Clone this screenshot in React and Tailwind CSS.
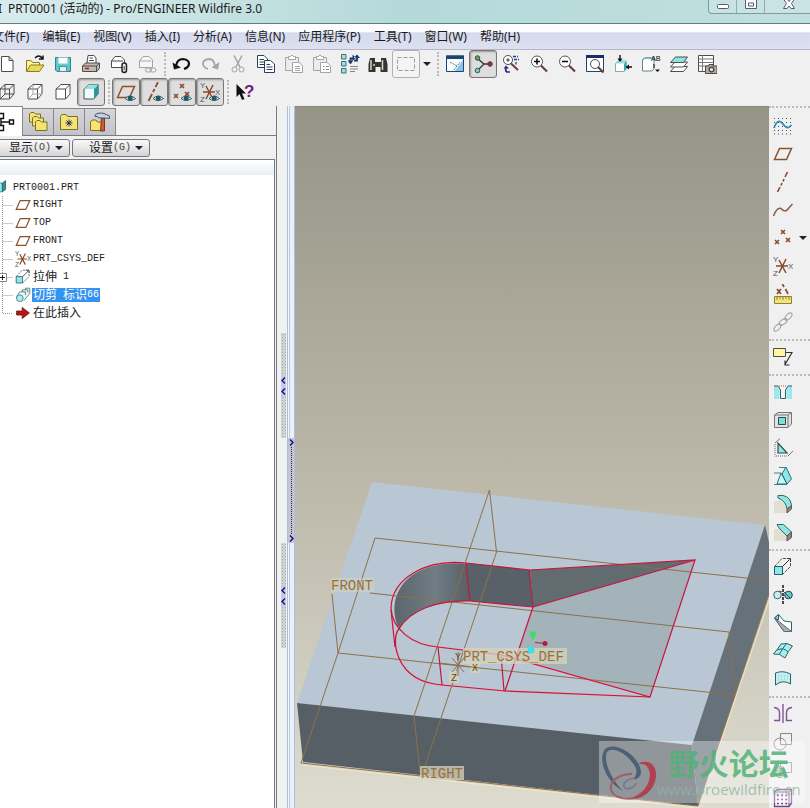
import React, { useState } from 'react';

const Icon = ({ children, className = 'w-5 h-5' }) => (
  <svg viewBox="0 0 20 20" className={`${className} shrink-0`} fill="none" stroke="#4d4d4d" strokeWidth="1">
    {children}
  </svg>
);

const Eye = () => (
  <g stroke="none">
    <path d="M9 16.5Q14 11.5 19.5 16.5Q14 20.5 9 16.5Z" fill="#e4f2f2" stroke="#35575c" />
    <circle cx="14.2" cy="16.3" r="2.5" fill="#1d5c66" />
  </g>
);

const Csys = () => (
  <g>
    <path d="M3 10H15M6 4L13 17M13 3L6 17" stroke="#8a4a2c" strokeWidth="1.5" />
    <g fill="#555" stroke="none" className="text-[8px] font-['Liberation_Sans',sans-serif]">
      <text x="0" y="6">Y</text>
      <text x="15" y="13">X</text>
      <text x="0" y="20">Z</text>
    </g>
  </g>
);

const Magnifier = ({ sign }) => (
  <g>
    <circle cx="8" cy="7.5" r="5.5" fill="#fff" stroke="#555" />
    <path d="M12 11.5L18 17.5" stroke="#69413a" strokeWidth="2.2" />
    <path d={sign === 'plus' ? 'M5 7.5H11M8 4.5V10.5' : 'M5 7.5H11'} stroke="#111" strokeWidth="1.6" />
  </g>
);

const Plane = () => <path d="M6.5 4.5H18.5L13.5 15.5H1.5Z" stroke="#8a5230" strokeWidth="1.5" />;

const Points = () => (
  <path d="M8 2L12 6M12 2L8 6M2 12L6 16M6 12L2 16M13 10L17 14M17 10L13 14" stroke="#8a4a2c" strokeWidth="1.6" />
);

const Clipboard = () => (
  <g stroke="#a5a5a5" fill="#ececec">
    <path d="M1.5 3.5H14.5V16.5H1.5Z" />
    <path d="M4.5 5.5V2.5H6.5Q8 -.5 9.5 2.5H11.5V5.5Z" fill="#fff" />
    <path d="M8.5 8.5H15L18.5 11.5V18.5H8.5Z" fill="#fff" />
  </g>
);

const Cube = ({ fill = '#fff', shaded }) => (
  <g>
    <path d="M3 7L8 2.5H17V12L12.5 17H3Z" fill={fill} />
    {shaded ? (
      <g stroke="none">
        <path d="M3 7L8 2.5H17.5L13 7Z" fill="#8fe3e3" />
        <path d="M13 7L17.5 2.5V12L13 17Z" fill="#2f969c" />
      </g>
    ) : (
      <path d="M3 7H12.5V17M12.5 7L17 2.5" />
    )}
  </g>
);

const glyphs = {
  new: <path d="M4.5 2.5H12L16 6.5V17.5H4.5ZM12 2.5V6.5H16" fill="#fff" />,
  open: (
    <g>
      <path d="M1.5 17V6.5H6L7.5 8.5H14.5V11" fill="#fff3a0" stroke="#8b7a23" />
      <path d="M1.5 17.5L5.5 11H19L14.5 17.5Z" fill="#eadb55" stroke="#8b7a23" />
      <path d="M10 4Q14 0 17 4M18 1.5V5H14" stroke="#111" strokeWidth="1.5" />
    </g>
  ),
  save: (
    <g>
      <path d="M2.5 3.5H17.5V17.5H4L2.5 16Z" fill="#5ac8cf" stroke="#3b7f89" />
      <path d="M5 3.5H15V10H5Z" fill="#f7ffff" stroke="#83c5cb" />
      <path d="M6.5 12.5H13.5V17.5H6.5Z" fill="#d7f6f6" stroke="#5a8b90" />
    </g>
  ),
  print: (
    <g>
      <path d="M6 9L7 1.5H13L15 4V9" fill="#fff" />
      <path d="M8.5 4H12M8 6.5H13" />
      <path d="M1.5 12L4.5 9H18.5V14L16 17.5H1.5Z" fill="#c4b9ac" />
      <path d="M1.5 12H15.5V17.5M15.5 12L18.5 9" />
      <path d="M4 14.5H8" stroke="#8f2f20" strokeWidth="1.5" />
    </g>
  ),
  send: (
    <g>
      <path d="M2.5 7L6 2.5H12L15.5 6V13.5H2.5Z" fill="#fff" />
      <path d="M2.5 7H14" />
      <rect x="13" y="9" width="4.500" height="9.500" rx="2.200" strokeWidth="1.500" stroke="#222" fill="#e8e8e8" />
      <path d="M15.2 12V16" />
    </g>
  ),
  link: (
    <g stroke="#a5a5a5">
      <path d="M2.5 7L6 2.5H12L15.5 6V13.5H2.5Z" fill="#f6f6f6" />
      <path d="M2.5 7H14" />
      <rect x="8.5" y="14" width="6" height="4" rx="2" fill="#eee" />
      <rect x="13" y="14" width="6" height="4" rx="2" />
    </g>
  ),
  undo: (
    <g>
      <path d="M4 12Q5 5 11 5Q17.5 6 17 10Q16.5 13.5 12 15" stroke="#111" strokeWidth="2.2" />
      <path d="M.5 8.5L2 15.5L9 13.5Z" fill="#111" stroke="none" />
    </g>
  ),
  redo: (
    <g>
      <path d="M15 12Q14 5 9 5Q2.5 6 3 10Q3.5 13.5 8 15" stroke="#a5a5a5" strokeWidth="1.8" />
      <path d="M19.5 8L18 15.5L11.5 13.5Z" fill="#a5a5a5" stroke="none" />
    </g>
  ),
  cut: (
    <g stroke="#a0a0a0">
      <path d="M6 1.5L12 13M14 1.5L8 13" strokeWidth="1.4" />
      <circle cx="6.5" cy="15.5" r="2.5" />
      <circle cx="13.5" cy="15.5" r="2.5" />
    </g>
  ),
  copy: (
    <g stroke="#29405c" fill="#fff">
      <path d="M1.5 1.5H8L11.5 5V13.5H1.5Z" />
      <path d="M3.500 5.500H8M3.500 8H8M3.500 10.500H8" />
      <path d="M8.500 6.500H14.500L18.500 10V18.500H8.500Z" />
      <path d="M10.500 10.500H14M10.500 13H16.500M10.500 15.500H16.500" />
    </g>
  ),
  paste: (
    <g>
      <Clipboard />
      <path d="M11 12.5H16M11 14.5H16M11 16.5H16" stroke="#a5a5a5" />
    </g>
  ),
  pasteSpecial: (
    <g>
      <Clipboard />
      <path d="M11 12.5H12.5M14 12.5H17M11 15.5H12.5M14 15.5H17" stroke="#888" />
    </g>
  ),
  regenerate: (
    <g>
      <path d="M1.5 .5H6V5H1.5ZM1.5 7.500H6V12H1.5ZM1.5 14.500H6V19H1.5Z" fill="#a5dedc" stroke="#33757b" />
      <path d="M10.500 9.500V4.500H13.500M17 2V6.500H14" stroke="#193870" strokeWidth="1.800" />
      <path d="M12.500 .5L16 4L12.500 6.500ZM7.500 6.500H13.500L10.500 10ZM13.500 4H20L17 .5Z" fill="#193870" stroke="none" />
      <path d="M10 12.500H18M10 15H18M10 17.500H15" stroke="#888" />
    </g>
  ),
  find: (
    <g>
      <path d="M2 4H7V8H13V4H18L19.500 10V18H12.500V13H7.500V18H.5V10Z" fill="#35352f" stroke="none" />
      <path d="M3 6V16M6 10V12M14.500 6V16" stroke="#d8d8c8" strokeWidth="1.500" />
    </g>
  ),
  select: <path d="M1.5 3.5H18.5V16.5H1.5Z" stroke="#999" strokeDasharray="4 2" />,
  repaint: (
    <g>
      <path d="M1.5 2H18.5V17.5H1.5Z" fill="#f8fdff" stroke="#1e4375" />
      <path d="M1 1.5H19V5H1Z" fill="#1e4375" stroke="none" />
      <path d="M10 17L18 6V17Z" fill="#8bc1e8" stroke="none" />
      <path d="M5 8L12 12L15 8M12 12L9 16" stroke="#55707f" strokeDasharray="2 1" />
    </g>
  ),
  spin: (
    <g>
      <path d="M4 4L11 10H16M11 10L5 16" stroke="#333" strokeWidth="1.3" />
      <circle cx="4.5" cy="4" r="2.3" fill="#48ad4d" />
      <circle cx="17" cy="10" r="2.3" fill="#b32032" />
      <circle cx="4.5" cy="16.5" r="2.3" fill="#61d6d6" />
    </g>
  ),
  orient: (
    <g>
      <circle cx="7" cy="6" r="4.5" fill="#fff" />
      <circle cx="7" cy="6" r="1.2" fill="#c88" />
      <path d="M10 9.5L17 16" stroke="#69413a" strokeWidth="2" />
      <path d="M12 2.5H17M13 5.5H18M15 8V10.5" stroke="#2c3f8d" strokeWidth="1.3" strokeDasharray="3 1" />
      <path d="M9 18H6Q4 17 5 14" stroke="#252b83" strokeWidth="1.7" />
      <path d="M2.500 14.5L5 11.5L8 14.5Z" fill="#252b83" stroke="none" />
    </g>
  ),
  zoomIn: <Magnifier sign="plus" />,
  zoomOut: <Magnifier />,
  refit: (
    <g>
      <path d="M1.5 1.5H18.5V17.5H1.5Z" fill="#fff" stroke="#1e4375" />
      <path d="M1 1H19V4H1Z" fill="#1d2b6e" stroke="none" />
      <circle cx="10" cy="10" r="4.5" />
      <path d="M13 13L18.5 18.5" stroke="#69413a" strokeWidth="2.2" />
    </g>
  ),
  reorient: (
    <g>
      <path d="M2.5 9.5L5 7H13V15L11 17.5H2.5Z" fill="#fff" stroke="#79b1b3" />
      <path d="M11 9.5L13.5 7V15L11 17.5Z" fill="#3aa9ab" stroke="none" />
      <path d="M3 9.5L5 7H13L11 9.5Z" fill="#94e0e0" stroke="none" />
      <path d="M7 1V6M14 13H19" stroke="#111" strokeWidth="1.4" />
      <path d="M4.5 4.5H9.5L7 8ZM16 10.5V15.5L12.5 13Z" fill="#111" stroke="none" />
    </g>
  ),
  views: (
    <g>
      <path d="M1.500 6L3.500 4H13V15L11 17H1.500Z" fill="#fff" stroke="#6a8588" />
      <path d="M1.500 6L3.500 4H10" stroke="#3fabad" />
      <path d="M12 10H14V14H12Z" fill="#666" stroke="none" />
      <path d="M14 15.500H19L16.500 18Z" fill="#111" stroke="none" />
      <text x="10" y="7" fill="#111" stroke="none" className="text-[8px] font-['Liberation_Mono',monospace]">AB</text>
    </g>
  ),
  layers: (
    <g>
      <path d="M1.500 17.500L6 12.500H18.500L14.500 17.500Z" fill="#fff" />
      <path d="M1.500 13L6 8H18.500L14.500 13Z" fill="#fff" />
      <path d="M1.500 8.500L6.500 3H18.500L14.500 8.500Z" fill="#8de4e0" />
    </g>
  ),
  viewManager: (
    <g>
      <path d="M1.500 1.500H16.500V17.500H1.500Z" fill="#fff" />
      <path d="M5.500 1.500V17.500M1.500 5H16.500M1.500 8.500H16.500M1.500 12H16.500" stroke="#777" />
      <path d="M8.500 12H12V10.500H16V12H20V19.500H8.500Z" fill="#b8aca2" />
      <circle cx="14.500" cy="15.500" r="2.300" fill="#eee" strokeWidth="1.500" />
    </g>
  ),
  wireframe: (
    <g>
      <Cube fill="none" />
      <path d="M8 2.500V12L3 17M8 12H17" />
    </g>
  ),
  hiddenLine: (
    <g>
      <Cube />
      <path d="M8 3V12L3 17M8 12H17" stroke="#a4a4a4" />
    </g>
  ),
  noHidden: <Cube />,
  shading: <Cube fill="#effcfc" shaded />,
  planeDisplay: <g><Plane /><Eye /></g>,
  axisDisplay: <g><path d="M14 0L11.500 5M10.500 7L9 10M8 12L4.500 19" stroke="#8a4a2c" strokeWidth="1.700" /><Eye /></g>,
  pointDisplay: <g><Points /><Eye /></g>,
  csysDisplay: <g><Csys /><Eye /></g>,
  help: (
    <g>
      <path d="M1.500 2V15L4.500 12L7 18L9.500 17L7 11.500H11Z" fill="#111" stroke="none" />
      <text x="9" y="15" fill="#702080" stroke="none" className="text-[17px] font-bold font-['Liberation_Sans',sans-serif]">?</text>
    </g>
  ),
  sketch: (
    <g>
      <path d="M1 2.500H19M1 6.500H19M1 10.500H19M1 14.500H19M1 18H19" stroke="#39506b" strokeDasharray="1 3" />
      <path d="M1 12C4 4 7 4 10 8S15 13 18.500 9" stroke="#2f88b6" strokeWidth="1.800" />
    </g>
  ),
  plane: <Plane />,
  axis: <path d="M14.500 0L12 5M11 7L10 9.500M9 11L8 13.500M7 15L4.500 20" stroke="#8a4a2c" strokeWidth="1.600" />,
  curve: <path d="M.5 16Q4 7 8 8.500Q12 13 15 9L19.500 4" stroke="#8a5a42" strokeWidth="1.500" />,
  points: <Points />,
  csys: <Csys />,
  analysis: (
    <g>
      <path d="M4 5L8 10M8 5L4 10M9.500 0L11 3M12.500 5L15 10" stroke="#8a4a2c" strokeWidth="1.700" />
      <path d="M1.500 12.500H18.500V19.500H1.500Z" fill="#f0e57c" stroke="#8c8135" />
      <path d="M4 13V16M7 13V15M10 13V16M13 13V15M16 13V16" stroke="#8c8135" />
    </g>
  ),
  reference: (
    <g stroke="#999">
      <ellipse cx="4.500" cy="15.500" rx="4.500" ry="2.300" transform="rotate(-48 4.500 15.500)" />
      <ellipse cx="10" cy="10" rx="4.500" ry="2.300" transform="rotate(-35 10 10)" />
      <ellipse cx="15.500" cy="4.500" rx="4.500" ry="2.300" transform="rotate(-48 15.500 4.500)" />
    </g>
  ),
  annotation: (
    <g>
      <path d="M.5 1.500H12.500V9.500H.5Z" fill="#fff6a0" />
      <path d="M13 5.500H19L12 17.500M12 13.500V18H16.500" stroke="#333" strokeWidth="1.200" />
    </g>
  ),
  hole: (
    <g>
      <path d="M1 4H19V17H13.500V8L16 4H4L6.500 8V17H1Z" fill="#9ee7ea" stroke="none" />
      <path d="M6 4H14L12.500 8V16.500H7.500V8Z" fill="#f4f4f4" stroke="none" />
      <path d="M1 4H5L7.500 8V16.500H12.500V8L15 4H19" stroke="#315e68" />
      <path d="M6 4H14" stroke="#b55" strokeDasharray="1 1" />
    </g>
  ),
  shell: (
    <g>
      <path d="M1.500 5L5 2.500H18.500V14L15 17.500H1.500Z" fill="#e2e2e2" stroke="#777" />
      <path d="M1.500 5H15V17.500M15 5L18.500 2.500" stroke="#777" />
      <path d="M5.500 7.500H12.500V14.500H5.500Z" fill="#7edce0" stroke="#274d53" />
    </g>
  ),
  rib: (
    <g>
      <path d="M5 5V15L14 15Z" fill="#98e6e2" stroke="#2b4b51" strokeWidth="1.200" />
      <path d="M2 6V18.500M3 18H15" stroke="#666" strokeDasharray="1 1" />
      <path d="M2 5L7 .5M15 18L20 13" stroke="#777" />
    </g>
  ),
  draft: (
    <g>
      <path d="M9 8L13 1L18.500 13L14 18Z" fill="#8be8e8" stroke="#267078" />
      <path d="M6 1.500H13M1 7H8M1 18.500H14" stroke="#3a868c" />
      <path d="M8 7L14 18H4Z" fill="#c9f6f5" stroke="#267078" />
    </g>
  ),
  round: (
    <g>
      <path d="M1 7H8L14 13V19H1Z" fill="#e3ded2" stroke="none" />
      <path d="M5 1.500H10Q18 3 18.500 12L14 15Q13 7 5 4Z" fill="#8ee6e3" stroke="#37686b" />
      <path d="M14 15L18.500 11.500V15L14 19Z" fill="#8d857c" stroke="#655" />
    </g>
  ),
  chamfer: (
    <g>
      <path d="M1 7H8L14 13V19H1Z" fill="#e3ded2" stroke="none" />
      <path d="M4 2.500H10.500L18.500 10L14 14L6 6Z" fill="#8ee6e3" stroke="#37686b" />
      <path d="M14 14L18.500 10V15.500L14 19Z" fill="#8d857c" stroke="#655" />
    </g>
  ),
  extrude: (
    <g>
      <path d="M1.500 9.500H9.500V17.500H1.500Z" fill="#8ce7ec" stroke="#285c66" />
      <path d="M1.500 9.500L9 1.500H17.500V9.500L9.500 17.500" stroke="#555" strokeDasharray="3 1" />
      <path d="M9.500 9.500L16.500 2.500M14 1.500H17.500V5" stroke="#333" />
    </g>
  ),
  revolve: (
    <g>
      <circle cx="4.500" cy="10" r="3.800" fill="#c8eded" stroke="#35686c" />
      <circle cx="15.500" cy="10" r="3.800" fill="#6ec6ca" stroke="#1d4b50" />
      <path d="M10 0V20" stroke="#111" strokeWidth="1.500" strokeDasharray="3 1" />
      <path d="M6 6L9 7M11 7L17 13" />
    </g>
  ),
  sweep: (
    <g>
      <path d="M1.500 5L5.500 1.500L11 8L18.500 9V18.500H11Z" fill="#fff" stroke="#28666b" />
      <path d="M1.500 5L5.500 1.500V7Z" fill="#79dde4" stroke="#28666b" />
      <path d="M1.500 5L18.500 18.500H11Z" fill="#a3b3b6" stroke="#667" />
    </g>
  ),
  boundary: (
    <g stroke="#28636b">
      <path d="M.5 13Q4 9 8 3Q14 1 19.500 5Q15 10 12 17Q7 12 .5 13Z" fill="#a6edf0" />
      <path d="M4 9Q11 6 15 11M13.500 2.500Q9 8 6.500 13" />
    </g>
  ),
  style: (
    <g>
      <path d="M2.500 4Q10 1 17.500 5V15Q10 10 2.500 16Z" fill="#c3efef" stroke="#28636b" />
      <path d="M5 7H15M5 10H15M6 12H9" stroke="#7bcaca" strokeDasharray="1 2" />
    </g>
  ),
  mirror: (
    <g stroke="#81539a" strokeWidth="1.400">
      <path d="M10 0V19M1 3.500Q6 4 6.500 8V16.500H1M19 3.500Q14 4 13.500 8V16.500H19" />
    </g>
  ),
  merge: (
    <g stroke="#888">
      <path d="M7.500 1.500H18.500V12.500H7.500Z" />
      <circle cx="7" cy="12" r="6" />
    </g>
  ),
  trim: (
    <g stroke="#8b9a8e">
      <path d="M7.500 2.500H18.500V12.500H7.500Z" />
      <circle cx="7" cy="12" r="5.500" />
      <path d="M7 6.500V18L2 14ZM2 11H12" />
    </g>
  ),
  pattern: (
    <g>
      <path d="M1.500 4L4 1.500H18.500V15L16 18.500H1.500Z" fill="#f7f2fa" stroke="#6d4580" strokeWidth="1.300" />
      <path d="M16 4V18.500M1.500 4H16L18.500 1.500" stroke="#6d4580" />
      <path d="M4 7.500H15M4 11.500H15M4 15.500H15" stroke="#4b285e" strokeWidth="1.700" strokeDasharray="1.700 2.500" />
    </g>
  ),
  modelTree: <path d="M1.500 1.500H6.500V6.500H1.500ZM1.500 13.500H6.500V18.500H1.500ZM12.500 8H16.500V12H12.500ZM4 7V13M4 10H12" stroke="#111" strokeWidth="1.400" />,
  folders: (
    <g fill="#f4e572" stroke="#7a702a">
      <path d="M1.500 10V2L3 .5H6L7.500 2H12.500V10Z" />
      <path d="M4.500 14V6L6 4.500H9L10.500 6H15.500V14Z" />
      <path d="M7.500 18.500V10L9 8.500H12L13.500 10H19V18.500Z" />
    </g>
  ),
  favorites: (
    <g>
      <path d="M1.500 17.500V4.500L3 2.500H7L8.500 4.500H18.500V17.500Z" fill="#f4e572" stroke="#7a702a" />
      <path d="M10 7.500V14.500M6.500 11H13.500M7.500 8.500L12.500 13.500M12.500 8.500L7.500 13.500" stroke="#252b6b" />
    </g>
  ),
  connections: (
    <g>
      <path d="M.5 18.500V10L2 8H6L7.500 10H12.500V18.500Z" fill="#f4e572" stroke="#7a702a" />
      <path d="M11.500 6H14.500V19H10.500Z" fill="#cf5c33" stroke="#7c351e" />
      <path d="M5 3Q8 0 14 1.500L19.500 4V6.500L14.500 6H9Q7 3.500 5 4.500Z" fill="#c5d1dd" stroke="#43576b" />
    </g>
  ),
  cutFeature: (
    <g stroke="#2f767a">
      <path d="M2 12L6 6H9V3.500H13V1.500H18.500V8L11 17" fill="#e9fafa" />
      <path d="M9 6H13V10M13 3.500H16V7" stroke="#555" />
      <circle cx="6" cy="14" r="4.200" fill="#b4eaea" />
    </g>
  ),
  insert: <path d="M2 7.500H9V3L18 10L9 17V12.500H2Z" fill="#b91318" stroke="#6c1515" />,
  part: (
    <g>
      <path d="M1 5H13V16H1Z" fill="#8beaea" stroke="#32898e" />
      <path d="M13 5L17 2V13L13 16Z" fill="#2f9197" stroke="#285f63" />
    </g>
  ),
};

const menus = ['文件(F)', '编辑(E)', '视图(V)', '插入(I)', '分析(A)', '信息(N)', '应用程序(P)', '工具(T)', '窗口(W)', '帮助(H)'];

const topRow = [
  ['new', 'open', 'save', 'print', 'send', 'link'],
  ['undo', 'redo', 'cut', 'copy', 'paste', 'pasteSpecial', 'regenerate', 'find', 'select'],
  ['repaint', 'spin', 'orient', 'zoomIn', 'zoomOut', 'refit', 'reorient', 'views', 'layers', 'viewManager'],
];

const displayRow = [
  ['wireframe', 'hiddenLine', 'noHidden', 'shading'],
  ['planeDisplay', 'axisDisplay', 'pointDisplay', 'csysDisplay'],
  ['help'],
];

const featureGroups = [
  ['sketch', 'plane', 'axis', 'curve', 'points', 'csys', 'analysis', 'reference'],
  ['annotation'],
  ['hole', 'shell', 'rib', 'draft', 'round', 'chamfer'],
  ['extrude', 'revolve', 'sweep', 'boundary', 'style'],
  ['mirror', 'merge', 'trim', 'pattern'],
];

const treeItems = [
  { icon: 'plane', name: 'RIGHT' },
  { icon: 'plane', name: 'TOP' },
  { icon: 'plane', name: 'FRONT' },
  { icon: 'csys', name: 'PRT_CSYS_DEF' },
  { icon: 'extrude', cjk: '拉伸', name: ' 1', expandable: true },
  { icon: 'cutFeature', cjk: '切剪', name: ' ', cjk2: '标识', suffix: '66' },
  { icon: 'insert', cjk: '在此插入' },
];

const Caret = () => (
  <svg viewBox="0 0 8 4" className="w-2 h-1 shrink-0">
    <path d="M0 0H8L4 4Z" fill="#222" />
  </svg>
);

const ToolButton = ({ name, pressed, onClick }) => {
  let frame = 'border-transparent';
  if (pressed) frame = 'border-[#777] bg-[#dedede] shadow-[inset_1px_1px_2px_#999]';
  if (name === 'select') frame = 'border-[#b0b0b0] bg-[#f4f4f4]';
  return (
    <button
      type="button"
      aria-label={name}
      onClick={onClick}
      className={`w-7 h-7 shrink-0 flex items-center justify-center border rounded-[3px] ${frame}`}
    >
      <Icon>{glyphs[name]}</Icon>
    </button>
  );
};

const Toolbar = ({ groups, pressed, onToggle }) => (
  <div className="flex h-7 -ml-[7px]">
    {groups.map((group, index) => (
      <div key={index} className="flex items-center">
        {index > 0 && <span className="w-[7px] h-6 flex justify-center"><i className="border-l-2 border-dotted border-[#bbb]" /></span>}
        {group.map((name) => (
          <ToolButton key={name} name={name} pressed={pressed.includes(name)} onClick={() => onToggle(name)} />
        ))}
        {group.includes('select') && (
          <button type="button" aria-label="select options" className="w-3.5 h-7 flex items-center justify-center">
            <Caret />
          </button>
        )}
      </div>
    ))}
  </div>
);

const Connector = ({ expandable, last }) => (
  <svg viewBox="0 0 13 18" className="w-[13px] h-[18px] shrink-0" fill="none">
    <path d={last ? 'M2.5 0V9.5H13' : 'M2.5 0V18M2.5 9.5H13'} stroke="#999" strokeDasharray="1 1" />
    {expandable && (
      <g>
        <path d="M-2.500 5.500H6.500V13.500H-2.500Z" fill="#fff" stroke="#888" />
        <path d="M0 9.500H5M2.500 7V12" stroke="#222" />
      </g>
    )}
  </svg>
);

const ModelTree = () => {
  const [selected, setSelected] = useState(5);
  return (
    <div className="flex-1 mr-px bg-white border-t border-r border-[#777a88]">
      <div className="h-3 mt-[3px] bg-gradient-to-b from-[#fafbfc] to-[#edf0f3]" />
      <div className="mt-[3px] flex items-center h-[18px] text-[10px] text-[#222] font-['Liberation_Mono',monospace]">
        <span className="w-[13px] -ml-2 mr-2 shrink-0"><Icon className="w-4 h-4">{glyphs.part}</Icon></span>
        PRT0001.PRT
      </div>
      <ul className="font-['Liberation_Mono','Noto_Sans_CJK_SC',monospace]">
        {treeItems.map((item, index) => (
          <li key={item.name + index} className="flex items-center h-[18px]">
            <Connector expandable={item.expandable} last={index === treeItems.length - 1} />
            <span className="w-[19px] flex justify-center"><Icon className="w-4 h-4">{glyphs[item.icon]}</Icon></span>
            <button
              type="button"
              onClick={() => setSelected(index)}
              className={`px-px flex items-center whitespace-pre leading-[14px] ${selected === index ? 'bg-[#3492f0] text-white' : 'text-[#222]'}`}
            >
              {item.cjk && <span className="pt-0.5 text-[12px] leading-3">{item.cjk}</span>}
              <span className="text-[10px]">{item.name}</span>
              {item.cjk2 && <span className="pt-0.5 text-[12px] leading-3">{item.cjk2}</span>}
              {item.suffix && <span className="text-[10px]">{item.suffix}</span>}
            </button>
          </li>
        ))}
      </ul>
    </div>
  );
};

const Navigator = () => {
  const [tab, setTab] = useState('modelTree');
  return (
    <aside className="w-[277px] shrink-0 flex flex-col border-r border-[#777a88]">
      <div className="flex items-end h-[30px] -ml-2 border-b border-[#777a88]">
        {['modelTree', 'folders', 'favorites', 'connections'].map((name) => (
          <button
            key={name}
            type="button"
            aria-label={name}
            onClick={() => setTab(name)}
            className={`w-[31px] flex items-center justify-center border-t border-r border-[#888] ${
              tab === name ? 'h-[30px] -mb-px bg-white' : 'h-[27px] bg-gradient-to-b from-[#d6d6da] to-[#c2c2c8]'
            }`}
          >
            <Icon>{glyphs[name]}</Icon>
          </button>
        ))}
      </div>
      <div className="flex items-center gap-0.5 h-[23px] -ml-2">
        {[['显示', '(O)'], ['设置', '(G)']].map(([label, key]) => (
          <button
            key={label}
            type="button"
            className="w-[78px] h-[18px] pl-4 pr-1.5 flex items-center justify-between border border-[#777] rounded-[3px] bg-gradient-to-b from-[#fafafa] to-[#d4d4d4] font-['Liberation_Mono','Noto_Sans_CJK_SC',monospace]"
          >
            <span className="flex items-center">
              <span className="pt-0.5 text-[12px] leading-3">{label}</span>
              <span className="text-[10px] text-[#444]">{key}</span>
            </span>
            <Caret />
          </button>
        ))}
      </div>
      <ModelTree />
    </aside>
  );
};

const Arrows = ({ path, count = 1 }) => (
  <>
    {Array.from({ length: count }, (_, i) => (
      <svg key={i} viewBox="0 0 5 9" className="w-[5px] h-[9px]" fill="none" stroke="#17177c" strokeWidth="1.5">
        <path d={path} />
      </svg>
    ))}
  </>
);

const Grip = () => (
  <button type="button" aria-label="collapse" className="w-[5px] h-[105px] flex flex-col items-center bg-[#d2d2d2] bg-[radial-gradient(#aaa_1px,transparent_1px)] bg-[length:3px_3px]">
    <span className="mt-[42px] py-px flex flex-col gap-0.5 bg-[#c9c9e6]">
      <Arrows path="M4 1.500L1 4.500L4 7.500" count={2} />
    </span>
  </button>
);

const Splitter = () => (
  <div className="flex shrink-0">
    <div className="w-2.5 pt-[227px] pr-px flex flex-col items-end gap-[105px] bg-[#f1f1f1]">
      <Grip />
      <Grip />
    </div>
    <div className="w-2 pt-[332px] border-x border-[#a9c0dc] bg-[linear-gradient(90deg,#f4f8fd_1px,#b4cae4_1px,#b4cae4_2px,#e9f0f9_2px)]">
      <button type="button" aria-label="expand" className="w-full h-[105px] flex flex-col items-center bg-[#c4c4d4]">
        <Arrows path="M1 1.500L4 4.500L1 7.500" />
        <i className="flex-1 border-l border-dotted border-[#222]" />
        <Arrows path="M1 1.500L4 4.500L1 7.500" />
      </button>
    </div>
  </div>
);

const Viewport = () => (
  <main className="flex-1 min-w-0 border-t border-[#88867b] bg-gradient-to-b from-[#969486] via-[#b9b6a8] to-[#dedccf]">
    <svg viewBox="295 107 474 701" className="w-full h-auto" fill="none">
      <defs>
        <linearGradient id="wall" x1="391" y1="0" x2="470" y2="0" gradientUnits="userSpaceOnUse">
          <stop offset="0" stopColor="#59636a" />
          <stop offset=".55" stopColor="#707d85" />
          <stop offset="1" stopColor="#565f65" />
        </linearGradient>
      </defs>
      <path d="M372 482L765 525L692 745L297 703Z" fill="#b8c7d3" />
      <path d="M297 703L692 745L698 806L303 762Z" fill="#575f66" />
      <path d="M765 525L776 573L698 806L692 745Z" fill="#66717a" />
      <path d="M533 607L695 560L650 697L517 658Z" fill="#a4b2ba" />
      <path d="M399 629C386 601 400 560 466 563L470 601C437 600 410 610 399 629Z" fill="url(#wall)" />
      <path d="M466 563L530 570L533 607L470 601Z" fill="#586168" />
      <path d="M530 570L695 560L533 607Z" fill="#626b70" />

      <g stroke="#f3e4c9">
        <path d="M301 765L698 808L772 592" />
      </g>
      <g stroke="#8d7048">
        <path d="M774 581L375 538L338 653L301 763L698 806L771 588" />
        <path d="M332 594L338 653L735 695L729 632L370 593" />
        <path d="M420 772L414 716L489.500 490L496.500 552L424 769" />
      </g>

      <g stroke="#f0a5b5" strokeWidth="2" opacity=".5">
        <path d="M466 563C426 559 392 578 391 608C392 629 412 645 438 647L502 655L650 697" />
        <path d="M399 629C391 637 393 681 442 685L505 691L650 697" />
      </g>
      <g stroke="#c8143c" strokeWidth="1.200">
        <path d="M466 563C426 559 392 578 391 608C392 629 412 645 438 647L502 655L650 697L695 560L530 570Z" />
        <path d="M391 610L395 647M399 629C410 610 437 600 470 601L533 607L695 560M533 607L505 691" />
        <path d="M399 629C391 637 393 681 442 685L505 691L650 697" />
        <path d="M466 563L470 601M529 570L533 607M438 647L442 685M501 655L504 691" />
      </g>

      <g fill="#d8d3b9" fillOpacity=".75">
        <path d="M463 648H567V664H463ZM420 766H464V780H420ZM470 661H480V673H470ZM449 671H459V683H449Z" />
        <path d="M331 578H374V592H331Z" fillOpacity=".5" />
      </g>
      <g stroke="#8d7048">
        <path d="M440 663L480 668M458 652V676M452 672L464 658M452 658L464 672" />
      </g>
      <g fill="#96713f" className="text-[14px] font-['Liberation_Mono',monospace]">
        <text x="331" y="590">FRONT</text>
        <text x="463" y="661">PRT_CSYS_DEF</text>
        <text x="421" y="778">RIGHT</text>
      </g>
      <g fill="#5f4a29" className="text-[10px] font-['Liberation_Mono',monospace]">
        <text x="455" y="660">Y</text>
        <text x="472" y="671">X</text>
        <text x="451" y="681">Z</text>
      </g>
      <path d="M533 634V639" stroke="#43dc62" strokeWidth="3" />
      <circle cx="533" cy="634" r="3" fill="#43dc62" />
      <circle cx="531" cy="650" r="3.500" fill="#35e4e9" />
      <path d="M535 642.500L545 643.500" stroke="#b31f3a" />
      <circle cx="545" cy="643.500" r="2.500" fill="#b31f3a" />
    </svg>
  </main>
);

const FeatureBar = () => (
  <nav className="w-[41px] shrink-0 pt-1 border-t-2 border-dotted border-[#bbb]">
    {featureGroups.map((group, index) => (
      <div key={group[0]}>
        {index > 0 && <div className="h-[7px] flex items-center"><i className="w-full border-t-2 border-dotted border-[#bbb]" /></div>}
        {group.map((name) => (
          <div key={name} className="flex items-center">
            <ToolButton name={name} />
            {name === 'points' && (
              <button type="button" aria-label="point types" className="ml-0.5"><Caret /></button>
            )}
          </div>
        ))}
      </div>
    ))}
  </nav>
);

const Watermark = () => (
  <div className="absolute right-[5px] bottom-[5px] h-[62px] w-[206px] flex items-center bg-white/35 pointer-events-none">
    <svg viewBox="0 0 58 62" className="w-[58px] h-[62px] shrink-0 opacity-75" fill="none">
      <path d="M24 50C8 42-2 19 6 8C17-1 42 16 42 32C41 37 37 39 34 38C39 33 38 28 35 24C28 12 13 5 8 11C4 20 12 38 24 50Z" fill="#35506d" />
      <path d="M38 23C50 17 58 24 57 36C55 50 43 60 28 58C43 55 51 44 51 33C50 25 46 22 38 23Z" fill="#b92539" />
      <path d="M33 33C20 33 10 40 12 49C15 57 26 59 36 57" stroke="#a34a58" strokeWidth="2" />
      <path d="M36 37C28 38 22 43 26 47C31 49 36 46 37 42" stroke="#6d6d85" strokeWidth="1.500" />
    </svg>
    <div className="flex flex-col items-center leading-none whitespace-nowrap">
      <span className="text-[30px] leading-[34px] font-bold text-[#52b279]/85 font-['Noto_Sans_CJK_SC',sans-serif]">野火论坛</span>
      <span className="text-[15px] leading-5 text-[#8cb5a4]/80 font-['Open_Sans',sans-serif]">www.proewildfire.cn</span>
    </div>
  </div>
);

const App = () => {
  const [pressed, setPressed] = useState(['spin', 'shading', 'planeDisplay', 'axisDisplay', 'pointDisplay', 'csysDisplay']);

  const toggle = (name) => {
    setPressed((prev) => (prev.includes(name) ? prev.filter((item) => item !== name) : [...prev, name]));
  };

  return (
    <div className="relative h-screen flex flex-col overflow-hidden bg-[#f0f0f0] text-[#1a1a1a] font-['Noto_Sans','Noto_Sans_CJK_SC',sans-serif]">
      <header className="h-6 shrink-0 flex items-start justify-between border-b border-[#5b7f83] bg-gradient-to-r from-[#d8ecec] via-[#b5d9d9] to-[#bfe0df]">
        <h1 className="text-[12px] leading-[18px] flex whitespace-nowrap">
          <span className="w-2 -ml-0.5 mr-0.5">I</span>
          PRT0001 (活动的) - Pro/ENGINEER Wildfire 3.0
        </h1>
        <div className="flex h-3.5 -mr-1 border border-t-0 border-[#7f9b9f] rounded-b-[4px] bg-[#c9e3e4]">
          <button type="button" aria-label="minimize" className="w-7 flex items-center justify-center border-r border-[#8faeb1]">
            <svg viewBox="0 0 12 5" className="w-3 h-[5px]"><rect x=".5" y=".5" width="11" height="4" rx="1" fill="#fff" stroke="#555d68" /></svg>
          </button>
          <button type="button" aria-label="maximize" className="w-7 flex items-start justify-center border-r border-[#8faeb1]">
            <svg viewBox="0 0 12 10" className="w-3 h-2.5" fill="#fff" stroke="#555d68"><path d="M.5-2H11.500V8.500H.5ZM3.500 3H8.500V6H3.500Z" /></svg>
          </button>
          <button type="button" aria-label="close" className="w-12 flex items-start justify-center">
            <svg viewBox="0 0 12 10" className="w-3 h-2.5" fill="#fff" stroke="#555d68"><path d="M.5-1H4L6 1.500L8-1H11.500L8.500 3.500L11.500 8.500H8L6 6L4 8.500H.5L3.500 3.500Z" /></svg>
          </button>
        </div>
      </header>

      <nav className="h-[26px] shrink-0 flex items-center gap-[13px] -ml-2 border-b border-[#b5b8c4] bg-[linear-gradient(#fdfdff_30%,#d5daed_36%,#dde1f1)] text-[12px] leading-4 whitespace-nowrap">
        {menus.map((menu) => (
          <button key={menu} type="button">{menu}</button>
        ))}
      </nav>

      <section className="h-14 shrink-0">
        <Toolbar groups={topRow} pressed={pressed} onToggle={toggle} />
        <Toolbar groups={displayRow} pressed={pressed} onToggle={toggle} />
      </section>

      <div className="flex flex-1 min-h-0">
        <Navigator />
        <Splitter />
        <Viewport />
        <FeatureBar />
      </div>

      <Watermark />
    </div>
  );
};

export default App;
